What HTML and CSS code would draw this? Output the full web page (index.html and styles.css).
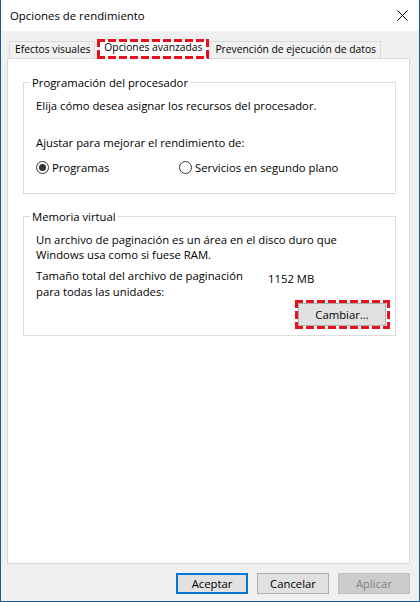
FILE: index.html
```html
<!DOCTYPE html>
<html lang="es">
<head>
    <meta charset="UTF-8">
    <title>Opciones de rendimiento</title>
    <link rel="stylesheet" href="styles.css">
</head>
<body>

    <div class="window">
        <div class="titlebar">
            <span class="title">Opciones de rendimiento</span>
            <svg class="close" width="11" height="11" viewBox="0 0 11 11">
                <path d="M0.5 0.5 L10.5 10.5 M10.5 0.5 L0.5 10.5" stroke="#000" stroke-width="1" fill="none"/>
            </svg>
        </div>

        <div class="content">
            <div class="tabs">
                <div class="tab first">Efectos visuales</div>
                <div class="tab active marked">Opciones avanzadas</div>
                <div class="tab">Prevención de ejecución de datos</div>
            </div>

            <div class="panel">
                <fieldset class="group">
                    <legend>Programación del procesador</legend>
                    <p class="line first-line">Elija cómo desea asignar los recursos del procesador.</p>
                    <p class="line adjust">Ajustar para mejorar el rendimiento de:</p>
                    <div class="radios">
                        <label class="radio-option">
                            <span class="radio checked"></span>
                            <span>Programas</span>
                        </label>
                        <label class="radio-option">
                            <span class="radio"></span>
                            <span>Servicios en segundo plano</span>
                        </label>
                    </div>
                </fieldset>

                <fieldset class="group memory">
                    <legend>Memoria virtual</legend>
                    <p class="line first-line">Un archivo de paginación es un área en el disco duro que<br>Windows usa como si fuese RAM.</p>
                    <div class="size-row">
                        <p class="line size-label">Tamaño total del archivo de paginación<br>para todas las unidades:</p>
                        <span class="size-value">1152 MB</span>
                    </div>
                    <div class="change-row">
                        <div class="marked-box marked">
                            <button class="btn change">Cambiar...</button>
                        </div>
                    </div>
                </fieldset>
            </div>

            <div class="buttons">
                <button class="btn default">Aceptar</button>
                <button class="btn">Cancelar</button>
                <button class="btn" disabled>Aplicar</button>
            </div>
        </div>
    </div>

</body>
</html>
```

FILE: styles.css
```css
body {
    margin: 0;
    font-family: 'Open Sans', 'Noto Sans', sans-serif;
    font-size: 11.3px;
    line-height: 15px;
    color: #000;
}
.window {
    width: 420px;
    height: 602px;
    box-sizing: border-box;
    border: 1px solid #1b5a8c;
    border-top: none;
    display: flex;
    flex-direction: column;
    background: #f0f0f0;
}
.titlebar {
    height: 31px;
    background: #fff;
    display: flex;
    align-items: center;
    justify-content: space-between;
    padding: 0 11px 0 9px;
    font-size: 11.4px;
}
.content {
    flex: 1;
    display: flex;
    flex-direction: column;
    padding: 8px 9px 7px 6px;
}

/* Tabs */
.tabs {
    display: flex;
    align-items: flex-end;
    height: 20px;
    margin-bottom: -1px;
    padding-left: 2px;
    position: relative;
    z-index: 1;
    font-size: 10.3px;
}
.tab {
    height: 16px;
    line-height: 15px;
    padding: 0 4px 0 5px;
    border: 1px solid #d9d9d9;
    border-bottom: none;
    background: #f0f0f0;
    margin-bottom: 1px;
    white-space: nowrap;
}
.tab.first {
    margin-right: 2px;
}
.tab.active {
    height: 20px;
    margin: 0;
    padding: 0 7px 0 7px;
    line-height: 17px;
    border: none;
}
.marked {
    background:
        repeating-linear-gradient(90deg, #e8101a 0 8px, transparent 8px 11px) top left / 100% 3px no-repeat,
        repeating-linear-gradient(90deg, #e8101a 0 8px, transparent 8px 11px) bottom left / 100% 3px no-repeat,
        repeating-linear-gradient(180deg, #e8101a 0 8px, transparent 8px 11px) top left / 3px 100% no-repeat,
        repeating-linear-gradient(180deg, #e8101a 0 8px, transparent 8px 11px) top right / 3px 100% no-repeat;
    background-color: #fff;
}

/* Panel */
.panel {
    flex: 1;
    background: #fff;
    border: 1px solid #d9d9d9;
    padding: 0 13px 0 15px;
}
.group {
    margin: 16px 0 0;
    padding: 0 12px 18px 12px;
    border: 1px solid #dcdcdc;
    min-width: 0;
}
.group legend {
    margin-left: -6px;
    padding: 0 2px;
}
.group.memory {
    margin-top: 15px;
    padding-bottom: 6px;
    padding-right: 5px;
}
.line {
    margin: 0;
}
.first-line {
    margin-top: 8px;
}
.adjust {
    margin-top: 22px;
}
.radios {
    display: flex;
    margin-top: 10px;
}
.radio-option {
    display: flex;
    align-items: center;
    gap: 3px;
    width: 143px;
}
.radio-option:last-child {
    width: auto;
}
.radio {
    width: 13px;
    height: 13px;
    box-sizing: border-box;
    border: 1px solid #333;
    border-radius: 50%;
    display: flex;
    align-items: center;
    justify-content: center;
}
.radio.checked::before {
    content: "";
    width: 7px;
    height: 7px;
    border-radius: 50%;
    background: #333;
}
.size-row {
    display: flex;
    margin-top: 6px;
    padding-right: 7px;
}
.size-label {
    width: 232px;
    line-height: 16px;
}
.size-value {
    padding-top: 3px;
}
.change-row {
    display: flex;
    justify-content: flex-end;
}
.marked-box {
    padding: 3px 4px 3px 3px;
}

/* Buttons */
.btn {
    font-family: inherit;
    font-size: 11.3px;
    color: #000;
    background: #e1e1e1;
    border: 1px solid #adadad;
    height: 21px;
    width: 72px;
    padding: 0;
    margin: 0;
}
.btn.change {
    display: block;
    width: 88px;
    height: 23px;
}
.btn.default {
    border: 2px solid #0078d7;
}
.btn:disabled {
    background: #cccccc;
    border-color: #bfbfbf;
    color: #838383;
}
.buttons {
    display: flex;
    justify-content: flex-end;
    gap: 9px;
    margin-top: 9px;
}
```
